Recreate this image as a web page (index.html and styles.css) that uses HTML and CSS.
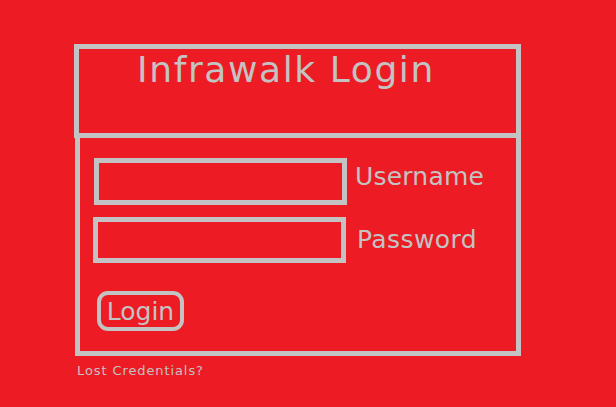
FILE: index.html
```html
<!DOCTYPE html>
<html>
<head>
<meta charset="utf-8">
<title>Infrawalk Login</title>
<link rel="stylesheet" href="styles.css">
</head>
<body>
<div class="panel">
  <div class="header">
    <h1 class="title">Infrawalk Login</h1>
  </div>
  <form class="body">
    <div class="row row-user">
      <input class="field" type="text">
      <label class="label">Username</label>
    </div>
    <div class="row row-pass">
      <input class="field" type="password">
      <label class="label">Password</label>
    </div>
    <button class="btn" type="button">Login</button>
  </form>
  <a class="lost">Lost Credentials?</a>
</div>
</body>
</html>
```

FILE: styles.css
```css
html, body {
  margin: 0;
  padding: 0;
  background: #ed1c24;
  height: 100%;
}
body {
  font-family: "DejaVu Sans", Verdana, sans-serif;
  color: #c3c3c3;
}
.panel {
  width: 447px;
  margin: 44px 0 0 74px;
}
.header {
  box-sizing: border-box;
  height: 94px;
  border: 5px solid #c3c3c3;
  padding-left: 58px;
}
.title {
  margin: 0;
  font-weight: normal;
  font-size: 36px;
  line-height: 42px;
  letter-spacing: 1.6px;
}
.body {
  box-sizing: border-box;
  margin: -5px 0 0 1px;
  height: 223px;
  border: 5px solid #c3c3c3;
  padding: 20px 0 0 14px;
  display: flex;
  flex-direction: column;
  align-items: flex-start;
}
.row {
  display: flex;
  align-items: flex-start;
}
.field {
  box-sizing: border-box;
  width: 253px;
  height: 47px;
  border: 5px solid #c3c3c3;
  background: transparent;
  margin: 0;
  padding: 0;
  outline: none;
}
.label {
  font-size: 25px;
  line-height: 29px;
  letter-spacing: 0.2px;
}
.row-user .label {
  margin: 4px 0 0 8px;
}
.row-pass {
  margin-top: 12px;
  margin-left: -1px;
}
.row-pass .field {
  height: 46px;
}
.row-pass .label {
  margin: 8px 0 0 11px;
  letter-spacing: 0.4px;
}
.btn {
  box-sizing: border-box;
  margin: 28px 0 0 3px;
  width: 87px;
  height: 40px;
  border: 4px solid #c3c3c3;
  border-radius: 11px;
  background: transparent;
  color: #c3c3c3;
  font-family: "DejaVu Sans", Verdana, sans-serif;
  font-size: 25px;
  line-height: 29px;
  padding: 0;
}
.lost {
  display: block;
  margin: 8px 0 0 3px;
  font-size: 13px;
  line-height: 14px;
  letter-spacing: 0.9px;
}
```
